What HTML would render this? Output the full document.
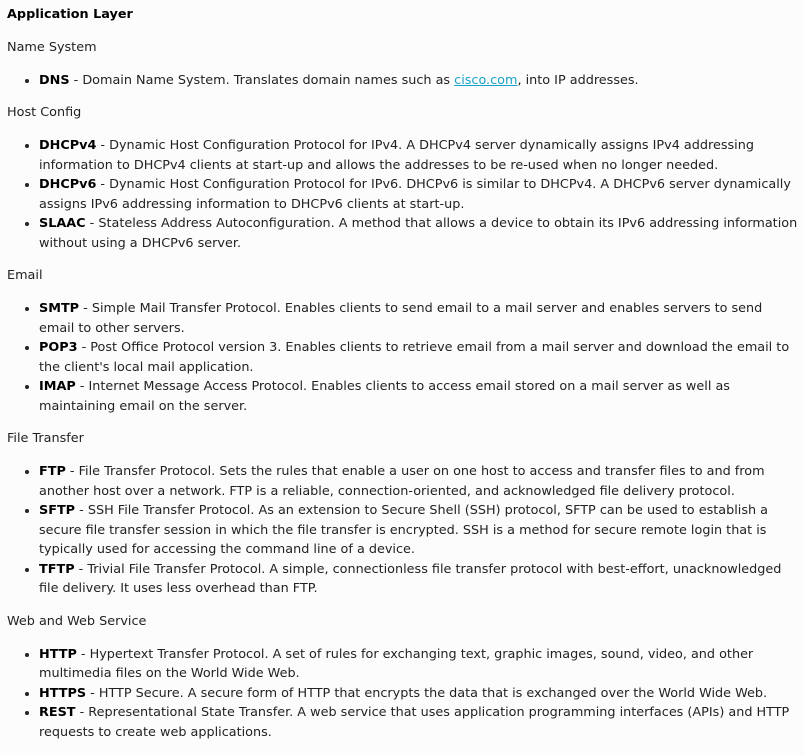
<!DOCTYPE html>
<html><head><style>
html,body{margin:0;background:#fcfcfc;}
body{padding:5px 6px 0 7px;font-family:"DejaVu Sans",sans-serif;font-size:12.8px;line-height:19.5px;color:#222;}
p{margin:0 0 13.25px 0;}
ul{margin:0 0 13.25px 0;padding-left:32px;}
li{margin:0;}
a{color:#1aa3c8;text-decoration:underline;}
b{color:#000;}
</style></head><body>
<p><b>Application Layer</b></p>
<p>Name System</p>
<ul><li><b>DNS</b> - Domain Name System. Translates domain names such as <a>cisco.com</a>, into IP addresses.</li></ul>
<p>Host Config</p>
<ul>
<li><b>DHCPv4</b> - Dynamic Host Configuration Protocol for IPv4. A DHCPv4 server dynamically assigns IPv4 addressing information to DHCPv4 clients at start-up and allows the addresses to be re-used when no longer needed.</li>
<li><b>DHCPv6</b> - Dynamic Host Configuration Protocol for IPv6. DHCPv6 is similar to DHCPv4. A DHCPv6 server dynamically assigns IPv6 addressing information to DHCPv6 clients at start-up.</li>
<li><b>SLAAC</b> - Stateless Address Autoconfiguration. A method that allows a device to obtain its IPv6 addressing information without using a DHCPv6 server.</li>
</ul>
<p>Email</p>
<ul>
<li><b>SMTP</b> - Simple Mail Transfer Protocol. Enables clients to send email to a mail server and enables servers to send email to other servers.</li>
<li><b>POP3</b> - Post Office Protocol version 3. Enables clients to retrieve email from a mail server and download the email to the client's local mail application.</li>
<li><b>IMAP</b> - Internet Message Access Protocol. Enables clients to access email stored on a mail server as well as maintaining email on the server.</li>
</ul>
<p>File Transfer</p>
<ul>
<li><b>FTP</b> - File Transfer Protocol. Sets the rules that enable a user on one host to access and transfer files to and from another host over a network. FTP is a reliable, connection-oriented, and acknowledged file delivery protocol.</li>
<li><b>SFTP</b> - SSH File Transfer Protocol. As an extension to Secure Shell (SSH) protocol, SFTP can be used to establish a secure file transfer session in which the file transfer is encrypted. SSH is a method for secure remote login that is typically used for accessing the command line of a device.</li>
<li><b>TFTP</b> - Trivial File Transfer Protocol. A simple, connectionless file transfer protocol with best-effort, unacknowledged file delivery. It uses less overhead than FTP.</li>
</ul>
<p>Web and Web Service</p>
<ul>
<li><b>HTTP</b> - Hypertext Transfer Protocol. A set of rules for exchanging text, graphic images, sound, video, and other multimedia files on the World Wide Web.</li>
<li><b>HTTPS</b> - HTTP Secure. A secure form of HTTP that encrypts the data that is exchanged over the World Wide Web.</li>
<li><b>REST</b> - Representational State Transfer. A web service that uses application programming interfaces (APIs) and HTTP requests to create web applications.</li>
</ul>
</body></html>
